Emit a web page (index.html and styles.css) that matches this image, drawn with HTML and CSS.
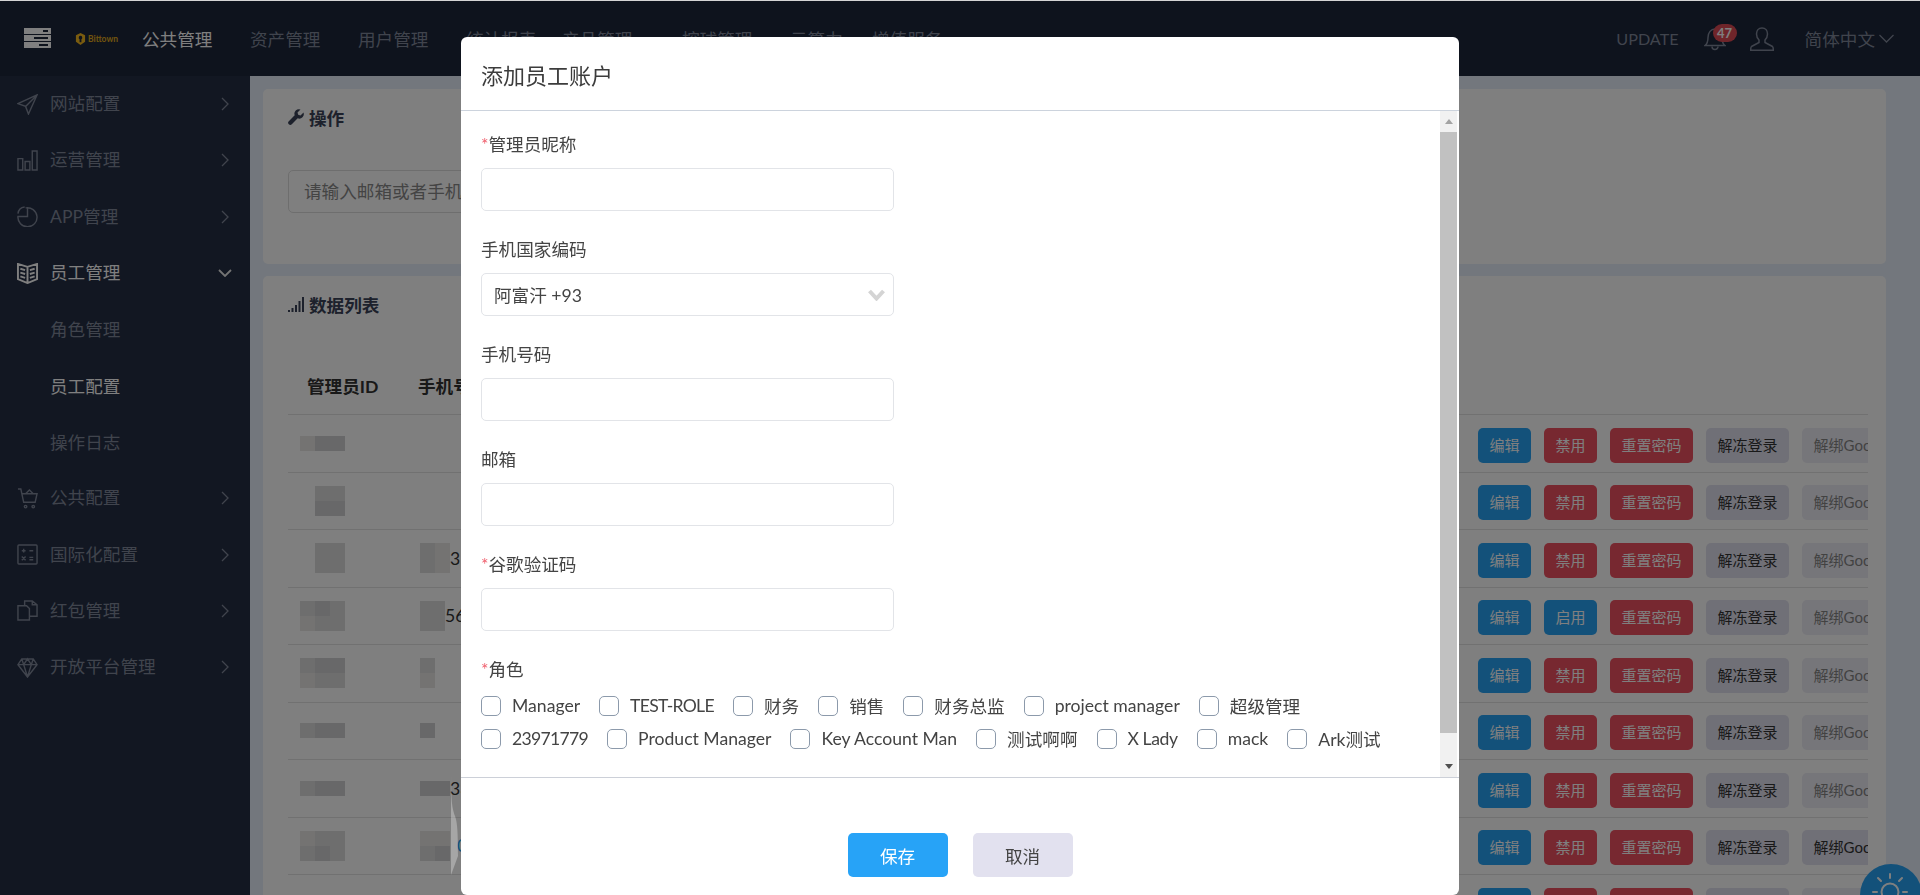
FILE: index.html
```html
<!DOCTYPE html>
<html lang="zh-CN">
<head>
<meta charset="utf-8">
<title>添加员工账户</title>
<link rel="stylesheet" href="styles.css">
</head>
<body>
<div class="app">
  <header class="topbar">
    <svg class="menu-icon" viewBox="0 0 27 20"><g fill="#fff"><rect width="27" height="6"/><rect y="7" width="27" height="6"/><rect y="14" width="27" height="6"/></g><g fill="#1c263a"><rect x="19" y="2" width="5" height="2"/><rect x="10" y="9" width="14" height="2"/><rect x="15" y="16" width="9" height="2"/></g></svg>
    <div class="logo">
      <svg class="logo-mark" viewBox="0 0 12 13"><path fill="#f5b81f" d="M6 0l5 2.500v7L6 13 1 9.500v-7z"/><path fill="#1c263a" d="M6 3a2 2 0 0 1 1 3.700V10H5V6.700A2 2 0 0 1 6 3z"/></svg>
      <span class="logo-text">Bittown</span>
    </div>
    <nav class="topnav">
      <a class="topnav-item is-active">公共管理</a>
      <a class="topnav-item">资产管理</a>
      <a class="topnav-item">用户管理</a>
      <a class="topnav-item topnav-item-short">统计报表</a>
      <a class="topnav-item topnav-item-wide">产品管理</a>
      <a class="topnav-item">控球管理</a>
      <a class="topnav-item topnav-item-tight">云算力</a>
      <a class="topnav-item">增值服务</a>
    </nav>
    <div class="topbar-right">
      <span class="update">UPDATE</span>
      <div class="bell">
        <svg class="bell-icon" viewBox="0 0 22 24" fill="none" stroke="#80889a" stroke-width="1.500"><path d="M1 18.500c2-1.500 3-3 3-8 0-5 3-8.500 7-8.500s7 3.500 7 8.500c0 5 1 6.500 3 8z"/><path d="M8 19.500a3 3 0 0 0 6 0"/></svg>
        <span class="badge">47</span>
      </div>
      <svg class="user-icon" viewBox="0 0 24 24" fill="none" stroke="#80889a" stroke-width="1.500"><path d="M12 1c-3.500 0-5.500 2.700-5.500 6 0 2.500 1 4.500 2.500 6v2.500L1.500 19.500c-.7.500-.8 1.300-.8 3.700h22.600c0-2.400-.1-3.200-.8-3.700L15 15.500V13c1.500-1.500 2.500-3.500 2.500-6 0-3.300-2-6-5.500-6z"/></svg>
      <span class="lang">简体中文</span>
      <svg class="lang-caret" viewBox="0 0 15 9" fill="none" stroke="#80889a" stroke-width="1.300"><path d="M.5 1l7 7 7-7"/></svg>
    </div>
  </header>

  <div class="layout">
    <aside class="sidebar">
      <div class="side-item">
        <svg class="side-icon" viewBox="0 0 22 22" fill="none" stroke="#80889a" stroke-width="1.500"><path d="M21 1L1 10l8 3 3 8zM21 1L9 13"/></svg>
        <span class="side-text">网站配置</span>
        <svg class="side-caret" viewBox="0 0 8 14" fill="none" stroke="#80889a" stroke-width="1.300"><path d="M1 1l6 6-6 6"/></svg>
      </div>
      <div class="side-item">
        <svg class="side-icon" viewBox="0 0 22 22" fill="none" stroke="#80889a" stroke-width="1.500"><path d="M1 9h5v12H1zM8.500 12h5v9h-5zM16 1h5v20h-5z"/></svg>
        <span class="side-text">运营管理</span>
        <svg class="side-caret" viewBox="0 0 8 14" fill="none" stroke="#80889a" stroke-width="1.300"><path d="M1 1l6 6-6 6"/></svg>
      </div>
      <div class="side-item">
        <svg class="side-icon" viewBox="0 0 22 22" fill="none" stroke="#80889a" stroke-width="1.500"><path d="M9 2a10 10 0 1 1-8 9h10V1"/><path d="M1 8a8 8 0 0 1 7-7"/></svg>
        <span class="side-text">APP管理</span>
        <svg class="side-caret" viewBox="0 0 8 14" fill="none" stroke="#80889a" stroke-width="1.300"><path d="M1 1l6 6-6 6"/></svg>
      </div>
      <div class="side-item is-open">
        <svg class="side-icon" viewBox="0 0 22 22" fill="none" stroke="#fff" stroke-width="2"><path d="M11 4L1 1v16l10 4 10-4V1zM11 4v17M3.500 6l5 1.500M3.500 10l5 1.500M3.500 14l5 1.500M18.500 6l-5 1.500M18.500 10l-5 1.500M18.500 14l-5 1.500"/></svg>
        <span class="side-text">员工管理</span>
        <svg class="side-caret-open" viewBox="0 0 14 8" fill="none" stroke="#e8e8e8" stroke-width="1.800"><path d="M1 1l6 6 6-6"/></svg>
      </div>
      <div class="side-sub">角色管理</div>
      <div class="side-sub is-current">员工配置</div>
      <div class="side-sub">操作日志</div>
      <div class="side-item">
        <svg class="side-icon" viewBox="0 0 22 22" fill="none" stroke="#80889a" stroke-width="1.500"><path d="M1 1h3l3 14h12l2-9H5M9 6l4-4 4 4"/><circle cx="9" cy="19.500" r="1.300"/><circle cx="17" cy="19.500" r="1.300"/></svg>
        <span class="side-text">公共配置</span>
        <svg class="side-caret" viewBox="0 0 8 14" fill="none" stroke="#80889a" stroke-width="1.300"><path d="M1 1l6 6-6 6"/></svg>
      </div>
      <div class="side-item">
        <svg class="side-icon" viewBox="0 0 22 22" fill="none" stroke="#80889a" stroke-width="1.500"><rect x="1" y="1" width="20" height="20" rx="1"/><path d="M5 7h4M7 5v4M13 7h4M5 13l4 4M9 13l-4 4M13 14h4M13 16.500h4"/></svg>
        <span class="side-text">国际化配置</span>
        <svg class="side-caret" viewBox="0 0 8 14" fill="none" stroke="#80889a" stroke-width="1.300"><path d="M1 1l6 6-6 6"/></svg>
      </div>
      <div class="side-item">
        <svg class="side-icon" viewBox="0 0 22 22" fill="none" stroke="#80889a" stroke-width="1.500"><path d="M1 6h9l3 3v12H1zM8 6V1h8l5 4v12h-8M16 1v4h5"/></svg>
        <span class="side-text">红包管理</span>
        <svg class="side-caret" viewBox="0 0 8 14" fill="none" stroke="#80889a" stroke-width="1.300"><path d="M1 1l6 6-6 6"/></svg>
      </div>
      <div class="side-item">
        <svg class="side-icon" viewBox="0 0 22 22" fill="none" stroke="#80889a" stroke-width="1.500"><path d="M5 2h12l4 6-10 13L1 8zM1 8h20M7 8l4 13 4-13M5 2l2 6 4-6 4 6 2-6"/></svg>
        <span class="side-text">开放平台管理</span>
        <svg class="side-caret" viewBox="0 0 8 14" fill="none" stroke="#80889a" stroke-width="1.300"><path d="M1 1l6 6-6 6"/></svg>
      </div>
    </aside>

    <main class="main">
      <section class="card card-search">
        <h2 class="card-title">
          <svg class="title-icon" viewBox="0 0 16 16"><path fill="#3a4358" d="M15.500 3.500l-3 3-2.300-.7-.7-2.300 3-3A4.500 4.500 0 0 0 6.700 6.300L.8 12.200a2 2 0 0 0 3 3l5.900-5.900a4.500 4.500 0 0 0 5.800-5.800z"/></svg>
          操作
        </h2>
        <input class="search-input" type="text" placeholder="请输入邮箱或者手机号码进行搜索">
      </section>

      <section class="card card-table">
        <h2 class="card-title">
          <svg class="title-icon" viewBox="0 0 16 16"><path fill="#3a4358" d="M0 14h2v2H0zM3.500 12h2v4h-2zM7 9h2v7H7zM10.500 5h2v11h-2zM14 1h2v15h-2z"/></svg>
          数据列表
        </h2>
        <div class="thead"><span class="th-id">管理员ID</span><span class="th-phone">手机号码</span></div>

        <div class="row">
          <div class="cell-id"><div class="mosaic"><i class="c l"></i><i class="c d"></i><i class="c d"></i></div></div>
          <div class="cell-phone"></div>
          <div class="actions"><a class="btn btn-blue">编辑</a><a class="btn btn-red">禁用</a><a class="btn btn-red">重置密码</a><a class="btn btn-gray">解冻登录</a><a class="btn btn-muted">解绑Google</a></div>
        </div>
        <div class="row">
          <div class="cell-id"><div class="mosaic"><i class="c e"></i><i class="c m"></i><i class="c m"></i><i class="c e"></i><i class="c d"></i><i class="c d"></i></div></div>
          <div class="cell-phone"></div>
          <div class="actions"><a class="btn btn-blue">编辑</a><a class="btn btn-red">禁用</a><a class="btn btn-red">重置密码</a><a class="btn btn-gray">解冻登录</a><a class="btn btn-muted">解绑Google</a></div>
        </div>
        <div class="row">
          <div class="cell-id"><div class="mosaic"><i class="c e"></i><i class="c m"></i><i class="c m"></i><i class="c e"></i><i class="c m"></i><i class="c m"></i></div></div>
          <div class="cell-phone"><div class="mosaic mosaic-2"><i class="c m"></i><i class="c l"></i><i class="c m"></i><i class="c l"></i></div><span class="phone-text">31</span></div>
          <div class="actions"><a class="btn btn-blue">编辑</a><a class="btn btn-red">禁用</a><a class="btn btn-red">重置密码</a><a class="btn btn-gray">解冻登录</a><a class="btn btn-muted">解绑Google</a></div>
        </div>
        <div class="row">
          <div class="cell-id"><div class="mosaic"><i class="c m"></i><i class="c d"></i><i class="c m"></i><i class="c l"></i><i class="c m"></i><i class="c m"></i></div></div>
          <div class="cell-phone"><div class="mosaic mosaic-2 mosaic-tight"><i class="c m"></i><i class="c m"></i><i class="c m"></i><i class="c m"></i></div><span class="phone-text">561</span></div>
          <div class="actions"><a class="btn btn-blue">编辑</a><a class="btn btn-blue">启用</a><a class="btn btn-red">重置密码</a><a class="btn btn-gray">解冻登录</a><a class="btn btn-muted">解绑Google</a></div>
        </div>
        <div class="row">
          <div class="cell-id"><div class="mosaic"><i class="c m"></i><i class="c d"></i><i class="c d"></i><i class="c l"></i><i class="c m"></i><i class="c m"></i></div></div>
          <div class="cell-phone"><div class="mosaic mosaic-1"><i class="c m"></i><i class="c l"></i></div></div>
          <div class="actions"><a class="btn btn-blue">编辑</a><a class="btn btn-red">禁用</a><a class="btn btn-red">重置密码</a><a class="btn btn-gray">解冻登录</a><a class="btn btn-muted">解绑Google</a></div>
        </div>
        <div class="row">
          <div class="cell-id"><div class="mosaic"><i class="c m"></i><i class="c d"></i><i class="c d"></i></div></div>
          <div class="cell-phone"><div class="mosaic mosaic-1"><i class="c d"></i></div></div>
          <div class="actions"><a class="btn btn-blue">编辑</a><a class="btn btn-red">禁用</a><a class="btn btn-red">重置密码</a><a class="btn btn-gray">解冻登录</a><a class="btn btn-muted">解绑Google</a></div>
        </div>
        <div class="row">
          <div class="cell-id"><div class="mosaic"><i class="c m"></i><i class="c d"></i><i class="c d"></i></div></div>
          <div class="cell-phone"><div class="mosaic mosaic-2"><i class="c d"></i><i class="c d"></i></div><span class="phone-text">33</span></div>
          <div class="actions"><a class="btn btn-blue">编辑</a><a class="btn btn-red">禁用</a><a class="btn btn-red">重置密码</a><a class="btn btn-gray">解冻登录</a><a class="btn btn-muted">解绑Google</a></div>
        </div>
        <div class="row">
          <div class="cell-id"><div class="mosaic"><i class="c l"></i><i class="c m"></i><i class="c m"></i><i class="c m"></i><i class="c d"></i><i class="c m"></i></div></div>
          <div class="cell-phone"><div class="mosaic mosaic-2"><i class="c l"></i><i class="c l"></i><i class="c m"></i><i class="c d"></i></div><span class="phone-text phone-link">0</span></div>
          <div class="actions"><a class="btn btn-blue">编辑</a><a class="btn btn-red">禁用</a><a class="btn btn-red">重置密码</a><a class="btn btn-gray">解冻登录</a><a class="btn btn-gray">解绑Google</a></div>
        </div>
        <div class="row">
          <div class="cell-id"><div class="mosaic"><i class="c e"></i><i class="c m"></i><i class="c m"></i></div></div>
          <div class="cell-phone"></div>
          <div class="actions"><a class="btn btn-blue">编辑</a><a class="btn btn-red">禁用</a><a class="btn btn-red">重置密码</a><a class="btn btn-gray">解冻登录</a><a class="btn btn-muted">解绑Google</a></div>
        </div>
      </section>
    </main>
  </div>

  <button class="sun-button" type="button" aria-label="主题">
    <svg class="sun-icon" viewBox="0 0 36 36" fill="none" stroke="#fff" stroke-width="2" stroke-linecap="round"><circle cx="18" cy="20" r="8.500"/><path d="M18 2v4M6 6l3 3M30 6l-3 3M1 20h4M31 20h4"/></svg>
  </button>
</div>

<div class="overlay">
  <svg class="sliver" viewBox="0 0 8 107"><path fill="#fff" fill-opacity=".3" d="M1 0c0 30 .5 38 4 48 2 6 3 12 3 40L1 107z"/></svg>
  <div class="modal">
    <div class="modal-header">添加员工账户</div>
    <div class="modal-body">
      <form class="form">
        <div class="field">
          <label class="label"><span class="star">*</span>管理员昵称</label>
          <input class="control" type="text">
        </div>
        <div class="field">
          <label class="label">手机国家编码</label>
          <div class="control select">
            <span>阿富汗 +93</span>
            <svg class="select-caret" viewBox="0 0 17 12" fill="none" stroke="#d4d4d4" stroke-width="4"><path d="M1.500 2l7 7.500 7-7.500"/></svg>
          </div>
        </div>
        <div class="field">
          <label class="label">手机号码</label>
          <input class="control" type="text">
        </div>
        <div class="field">
          <label class="label">邮箱</label>
          <input class="control" type="text">
        </div>
        <div class="field">
          <label class="label"><span class="star">*</span>谷歌验证码</label>
          <input class="control" type="text">
        </div>
        <div class="field-roles">
          <label class="label"><span class="star">*</span>角色</label>
          <div class="roles">
            <label class="role"><input class="check" type="checkbox">Manager</label>
            <label class="role role-narrow"><input class="check" type="checkbox">TEST-ROLE</label>
            <label class="role"><input class="check" type="checkbox">财务</label>
            <label class="role"><input class="check" type="checkbox">销售</label>
            <label class="role"><input class="check" type="checkbox">财务总监</label>
            <label class="role"><input class="check" type="checkbox">project manager</label>
            <label class="role"><input class="check" type="checkbox">超级管理</label>
            <span class="role-break"></span>
            <label class="role role-narrow"><input class="check" type="checkbox">23971779</label>
            <label class="role"><input class="check" type="checkbox">Product Manager</label>
            <label class="role"><input class="check" type="checkbox">Key Account Man</label>
            <label class="role"><input class="check" type="checkbox">测试啊啊</label>
            <label class="role role-slim"><input class="check" type="checkbox">X Lady</label>
            <label class="role"><input class="check" type="checkbox">mack</label>
            <label class="role"><input class="check" type="checkbox">Ark测试</label>
          </div>
        </div>
      </form>
      <div class="scrollbar">
        <div class="scroll-btn"><span class="arrow-up"></span></div>
        <div class="scroll-track"><div class="scroll-thumb"></div></div>
        <div class="scroll-btn"><span class="arrow-down"></span></div>
      </div>
    </div>
    <div class="modal-footer">
      <button class="footer-btn footer-save" type="button">保存</button>
      <button class="footer-btn footer-cancel" type="button">取消</button>
    </div>
  </div>
</div>
</body>
</html>
```
FILE: styles.css
```css
* { box-sizing: border-box; }
html, body { margin: 0; height: 895px; overflow: hidden; }
body {
  border-top: 1px solid #d4d4d4;
  background: #e6eefa;
  font-family: "Lato", "Noto Sans CJK SC", sans-serif;
  font-size: 17.6px;
  color: #444;
}
.app { height: 894px; display: flex; flex-direction: column; }

/* top bar */
.topbar {
  height: 75px;
  flex: none;
  display: flex;
  align-items: center;
  background: #1c263a;
  padding-left: 24px;
}
.menu-icon { width: 27px; height: 20px; flex: none; margin-top: -1px; }
.logo { display: flex; align-items: center; gap: 2px; margin-left: 24px; width: 44px; flex: none; }
.logo-mark { width: 11px; height: 12px; flex: none; }
.logo-text { font-size: 8.5px; color: #e0aa1c; font-weight: 700; white-space: nowrap; }
.topnav { display: flex; margin-left: 23px; }
.topnav-item { color: #80889a; margin-right: 36px; white-space: nowrap; width: 72px; }
.topnav-item.is-active { color: #fff; }
.topnav-item-short { margin-right: 24px; }
.topnav-item-wide { margin-right: 48px; }
.topnav-item-tight { margin-right: 28px; width: 54px; }
.topbar-right { margin-left: auto; display: flex; align-items: center; padding-right: 26px; }
.update { color: #80889a; font-size: 16.200px; }
.bell { position: relative; width: 22px; height: 24px; margin-left: 25px; }
.bell-icon { width: 22px; height: 24px; display: block; }
.badge {
  position: absolute;
  left: 9px;
  top: -3px;
  width: 24px;
  height: 18px;
  border-radius: 9px;
  background: #de4a55;
  color: #fff;
  font-size: 13px;
  font-weight: 700;
  line-height: 18px;
  text-align: center;
}
.user-icon { width: 24px; height: 24px; margin-left: 24px; }
.lang { color: #80889a; margin-left: 31px; white-space: nowrap; }
.lang-caret { width: 15px; height: 9px; margin-left: 4px; }

.layout { flex: 1; display: flex; min-height: 0; }

/* sidebar */
.sidebar { width: 250px; flex: none; background: #242e44; }
.side-item, .side-sub {
  height: 56.3px;
  display: flex;
  align-items: center;
  color: #80889a;
  white-space: nowrap;
  line-height: 22px;
}
.side-item { padding-left: 17px; }
.side-sub { padding-left: 50px; padding-top: 2px; }
.side-sub.is-current, .is-open .side-text { color: #fff; }
.side-icon { width: 21px; height: 21px; flex: none; }
.side-text { margin-left: 12px; }
.side-caret { width: 8px; height: 14px; margin-left: auto; margin-right: 21px; }
.side-caret-open { width: 14px; height: 8px; margin-left: auto; margin-right: 18px; }

/* main */
.main {
  flex: 1;
  min-width: 0;
  padding: 13px 34px 0 13px;
  display: flex;
  flex-direction: column;
  gap: 12px;
  overflow: hidden;
}
.card { background: #fff; border-radius: 5px; padding: 16px 18px 0 25px; flex: none; }
.card-search { height: 175px; }
.card-table { padding-top: 16px; }
.card-title {
  margin: 0;
  height: 24px;
  display: flex;
  align-items: center;
  gap: 5px;
  font-size: 17.6px;
  font-weight: 700;
  color: #3a4358;
}
.title-icon { width: 16px; height: 16px; flex: none; }
.search-input {
  display: block;
  width: 420px;
  height: 43px;
  margin-top: 41px;
  padding: 0 15px;
  border: 1px solid #ddd;
  border-radius: 5px;
  background: #fff;
  font: inherit;
}
.search-input::placeholder { color: #888; }
.thead {
  height: 98px;
  padding: 59px 0 0 19px;
  display: flex;
  font-weight: 700;
  color: #333;
  line-height: 24px;
  white-space: nowrap;
}
.th-id { width: 111px; }
.row {
  height: 57.5px;
  border-top: 1px solid #e2e2e2;
  display: flex;
  align-items: center;
}
.cell-id { width: 132px; padding-left: 12px; flex: none; }
.cell-phone { display: flex; align-items: center; }
.mosaic { display: grid; grid-template-columns: repeat(3, 15px); grid-auto-rows: 15px; }
.mosaic-2 { grid-template-columns: repeat(2, 15px); }
.mosaic-tight { grid-template-columns: repeat(2, 12.5px); }
.mosaic-1 { grid-template-columns: 15px; }
.c { display: block; }
.c.e { background: transparent; }
.c.l { background: #e8e6e4; }
.c.m { background: #dcdcdc; }
.c.d { background: #d0d0d2; }
.phone-text { color: #333; white-space: nowrap; }
.phone-link { margin-left: 7px; color: #27a3f5; }
.actions {
  margin-left: auto;
  margin-top: 4px;
  width: 390px;
  flex: none;
  display: flex;
  gap: 13px;
  overflow: hidden;
}
.btn {
  flex: none;
  height: 35px;
  padding: 0 11.5px;
  border-radius: 5px;
  font-size: 15px;
  line-height: 35px;
  white-space: nowrap;
}
.btn-blue { background: #27a3f5; color: #fff; }
.btn-red { background: #ee5060; color: #fff; }
.btn-gray { background: #e0e0ee; color: #333; }
.btn-muted { background: #e0e0ee; color: #333; opacity: .6; }

.sun-button {
  position: fixed;
  left: 1860px;
  top: 864px;
  width: 62px;
  height: 62px;
  padding: 0;
  border: 0;
  border-radius: 50%;
  background: #27a3f5;
}
.sun-icon { position: absolute; left: 12px; top: 8px; width: 36px; height: 36px; }

/* modal */
.overlay {
  position: fixed;
  left: 0;
  right: 0;
  top: 1px;
  bottom: 0;
  background: rgba(0, 0, 0, .5);
  display: flex;
  justify-content: center;
  padding-top: 36px;
}
.sliver { position: absolute; left: 450px; top: 767px; width: 8px; height: 107px; }
.modal {
  width: 998px;
  height: 858px;
  background: #fff;
  border-radius: 6px;
  display: flex;
  flex-direction: column;
  overflow: hidden;
  color: #444;
}
.modal-header {
  height: 74px;
  flex: none;
  padding-left: 20px;
  display: flex;
  align-items: center;
  border-bottom: 1px solid #ccd3dd;
  font-size: 22px;
  color: #3c3c3c;
}
.modal-body {
  flex: 1;
  min-height: 0;
  display: flex;
  justify-content: space-between;
  overflow: hidden;
}
.form { padding: 21px 0 0 20px; width: 800px; }
.field { margin-bottom: 26px; }
.label { display: block; height: 24px; line-height: 25px; margin-bottom: 12px; white-space: nowrap; }
.star { color: #f0606e; }
.control {
  display: block;
  width: 413px;
  height: 43px;
  padding: 0 12px;
  border: 1px solid #e2e4e8;
  border-radius: 5px;
  background: #fff;
  font: inherit;
  color: #444;
}
.select { display: flex; align-items: center; justify-content: space-between; padding-right: 8px; }
.select-caret { width: 17px; height: 12px; }
.field-roles .label { margin-bottom: 8.5px; }
.roles { display: flex; flex-wrap: wrap; width: 940px; column-gap: 19px; row-gap: .5px; }
.role-break { flex-basis: 100%; height: 0; }
.role { display: flex; align-items: center; gap: 11px; height: 32px; white-space: nowrap; }
.role-narrow { letter-spacing: -.7px; }
.role-slim { letter-spacing: -.4px; }
.check {
  appearance: none;
  width: 20px;
  height: 20px;
  margin: 0;
  border: 1px solid #8c9aab;
  border-radius: 5px;
  background: #fff;
  flex: none;
}
.scrollbar { width: 19px; flex: none; padding-right: 2px; background: #fff; display: flex; flex-direction: column; }
.scroll-btn { height: 21px; flex: none; background: #f1f1f1; display: flex; align-items: center; justify-content: center; }
.scroll-track { flex: 1; background: #f1f1f1; padding-bottom: 23px; display: flex; }
.scroll-thumb { flex: 1; background: #c1c1c1; }
.arrow-up, .arrow-down { width: 0; height: 0; border-left: 4.500px solid transparent; border-right: 4.500px solid transparent; }
.arrow-up { border-bottom: 5px solid #a3a3a3; }
.arrow-down { border-top: 5px solid #505050; }
.modal-footer {
  height: 118px;
  flex: none;
  border-top: 1px solid #ccd0d8;
  padding-top: 55px;
  display: flex;
  justify-content: center;
  align-items: flex-start;
  gap: 25px;
}
.footer-btn {
  width: 100px;
  height: 44px;
  border: 0;
  border-radius: 5px;
  font: inherit;
}
.footer-save { background: #27a3f7; color: #fff; }
.footer-cancel { background: #e2e1ef; color: #444; }
```
